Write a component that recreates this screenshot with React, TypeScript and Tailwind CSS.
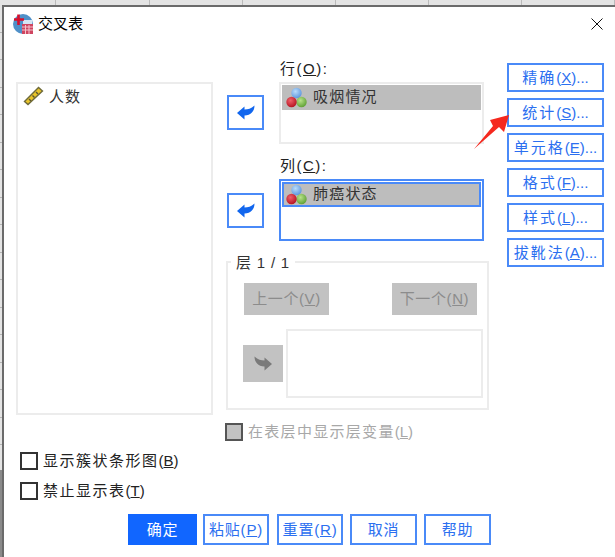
import React from "react";

const fontStack = "font-['Liberation_Sans','Noto_Sans_CJK_SC',sans-serif]";

function ArrowIcon({ flip, color }: { flip?: boolean; color: string }) {
  return (
    <svg width="18" height="15" viewBox="0 0 18 15" className={flip ? "-scale-x-100" : ""}>
      <path d="M0 8 L7.5 1.5 L7.5 4.5 C11 4.5 14 3.5 17.5 0.5 C17.5 6 14 10.5 7.5 10.5 L7.5 14.5 Z" fill={color} />
    </svg>
  );
}

function VarIcon() {
  return (
    <svg width="21" height="21" viewBox="0 0 21 21" className="shrink-0">
      <defs>
        <radialGradient id="ballBlue" cx="40%" cy="35%" r="70%">
          <stop offset="0%" stopColor="#b9dcfb" />
          <stop offset="100%" stopColor="#5a94dc" />
        </radialGradient>
        <radialGradient id="ballRed" cx="40%" cy="35%" r="70%">
          <stop offset="0%" stopColor="#f0606a" />
          <stop offset="100%" stopColor="#b3101f" />
        </radialGradient>
        <radialGradient id="ballGreen" cx="40%" cy="35%" r="70%">
          <stop offset="0%" stopColor="#b8e28a" />
          <stop offset="100%" stopColor="#5c9e32" />
        </radialGradient>
      </defs>
      <circle cx="10.5" cy="6" r="5.2" fill="url(#ballBlue)" />
      <circle cx="15.5" cy="15" r="5.2" fill="url(#ballGreen)" />
      <circle cx="5.5" cy="15" r="5.2" fill="url(#ballRed)" />
    </svg>
  );
}

function RulerIcon() {
  return (
    <svg width="21" height="20" viewBox="0 0 21 20" className="shrink-0">
      <path d="M0.5 15.5 L15.5 0.5 L20.5 5 L5 19.5 Z" fill="#6e6a3a" />
      <path d="M2.5 15.5 L15.5 2.5 L18.5 5 L5 17.5 Z" fill="#e8c32a" />
      <path d="M6 13 L8 15 M9.5 9.5 L11.5 11.5 M13 6 L15 8" stroke="#5a5530" strokeWidth="1.4" />
    </svg>
  );
}

function TitleIcon() {
  return (
    <svg width="20" height="20" viewBox="0 0 20 20" className="shrink-0">
      <circle cx="10" cy="10" r="10" fill="#4f90c8" />
      <path d="M10 6 H19 V11 H10 Z" fill="#d5e6f4" />
      <rect x="9" y="10" width="11" height="10" fill="#cf4560" />
      <path d="M9 13 H20 M9 16 H20 M12.5 11 V20 M16 11 V20" stroke="#f3c3cc" strokeWidth="1" />
      <path d="M1 5.5 H11 M5.5 0.5 V11" stroke="#d8102c" strokeWidth="2.6" />
    </svg>
  );
}

function SideButton({ label, mn }: { label: string; mn: string }) {
  return (
    <button className="flex h-[29px] w-[97px] items-center justify-center border-2 border-[#4a8af8] bg-white pt-[2px] text-[15px] text-[#2b6ff0]">
      <span className="tracking-[2px]">{label}</span>(<u>{mn}</u>)...
    </button>
  );
}

function FootButton({ children, primary, width }: { children: React.ReactNode; primary?: boolean; width: string }) {
  return (
    <button
      className={`flex h-[31px] items-center justify-center border-2 pt-px text-[15px] tracking-[0.8px] ${width} ${
        primary ? "border-[#1166ff] bg-[#1166ff] text-white" : "border-[#4a8af8] bg-white text-[#2b6ff0]"
      }`}
    >
      {children}
    </button>
  );
}

function TargetRow({
  label,
  mn,
  value,
  active,
  arrowTop,
}: {
  label: string;
  mn: string;
  value: string;
  active?: boolean;
  arrowTop: string;
}) {
  return (
    <div className="flex">
      <button className={`ml-px flex h-[35px] w-[37px] items-center justify-center border-2 border-[#4a8af8] bg-white ${arrowTop}`}>
        <ArrowIcon color="#1166ee" />
      </button>
      <div className="ml-[15px] w-[205px]">
        <div className="h-[22px] pl-px text-[15px] leading-[18px] tracking-[1.5px] text-[#222]">
          {label}(<u>{mn}</u>):
        </div>
        <div className={`h-[62px] border-2 p-[1px] ${active ? "border-[#4a8af8]" : "border-[#ececec]"}`}>
          <div
            className={`flex h-[25px] items-center gap-[6px] bg-[#bdbdbd] text-[15px] tracking-[1.2px] text-[#333] ${
              active ? "border-2 border-[#4a8af8] pl-[2px]" : "pl-[4px]"
            }`}
          >
            <VarIcon />
            <span>{value}</span>
          </div>
        </div>
      </div>
    </div>
  );
}

function Checkbox({ label, mn }: { label: string; mn: string }) {
  return (
    <label className="flex h-[18px] items-center gap-[5px] text-[15px] text-[#222]">
      <span className="h-[18px] w-[18px] border-2 border-[#333] bg-white" />
      <span>
        <span className="tracking-[1.5px]">{label}</span>(<u>{mn}</u>)
      </span>
    </label>
  );
}

export default function App() {
  return (
    <div className={`relative h-[557px] w-[615px] overflow-hidden bg-[#e4e4e4] ${fontStack}`}>
      {/* spreadsheet behind the dialog */}
      <div className="flex h-[5px]">
        <div className="w-[57px] border-r border-[#bbbbbb]" />
        {[0, 1, 2, 3, 4, 5].map((i) => (
          <div key={i} className="w-[94px] border-r border-[#bbbbbb]" />
        ))}
      </div>

      <div className="flex h-[552px]">
        <div className="flex w-[2px] flex-col">
          <div className="h-[465px]">
            {Array.from({ length: 17 }).map((_, i) => (
              <div key={i} className="h-[27.5px] border-b border-[#b5b5b5]" />
            ))}
          </div>
          <div className="flex-1 bg-[#8a8a8a]" />
        </div>

        <div className="flex-1 border-t-2 border-l-2 border-[#6b6b6b] bg-white">
          {/* title bar */}
          <div className="flex h-[27px] items-center justify-between pt-[7px] pr-[12px] pl-[9px]">
            <div className="flex items-center gap-[5px]">
              <TitleIcon />
              <span className="text-[15px] leading-[20px] text-black">交叉表</span>
            </div>
            <svg width="12" height="12" viewBox="0 0 12 12">
              <path d="M0.5 0.5 L11.5 11.5 M11.5 0.5 L0.5 11.5" stroke="#111" strokeWidth="1" />
            </svg>
          </div>

          <div className="mt-[26px] flex pl-[12px]">
            {/* source list */}
            <div className="mt-[22px] flex h-[333px] w-[197px] items-start gap-[5px] border-2 border-[#ececec] px-[5px] pt-[2px]">
              <RulerIcon />
              <span className="text-[15px] leading-[22px] tracking-[1px] text-[#333]">人数</span>
            </div>

            <div className="ml-[13px] w-[263px]">
              <TargetRow label="行" mn="O" value="吸烟情况" arrowTop="mt-[35px]" />
              <div className="mt-[13px]">
                <TargetRow label="列" mn="C" value="肺癌状态" active arrowTop="mt-[36px]" />
              </div>

              {/* layer group */}
              <div className="relative mt-[20px] h-[149px] border-2 border-[#ececec] pt-[20px]">
                <span className="absolute -top-[10px] left-[3px] bg-white px-[5px] text-[15px] leading-[20px] tracking-[0.8px] text-[#333]">
                  层 1 / 1
                </span>
                <div className="flex justify-between pr-[10px] pl-[16px]">
                  <button className="h-[32px] w-[85px] bg-[#c2c2c2] text-[15px] tracking-[0.6px] text-[#8c8c8c]">
                    上一个(<u>V</u>)
                  </button>
                  <button className="h-[32px] w-[85px] bg-[#c2c2c2] text-[15px] tracking-[0.6px] text-[#8c8c8c]">
                    下一个(<u>N</u>)
                  </button>
                </div>
                <div className="mt-[14px] flex items-center pl-[15px]">
                  <div className="flex h-[37px] w-[40px] items-center justify-center bg-[#c2c2c2]">
                    <ArrowIcon flip color="#7a7a7a" />
                  </div>
                  <div className="ml-[3px] h-[69px] w-[197px] border-2 border-[#ececec]" />
                </div>
              </div>

              <div className="mt-[13px] flex h-[18px] items-center gap-[5px] text-[15px] text-[#a8a8a8]">
                <span className="-ml-px h-[18px] w-[18px] border-2 border-[#555] bg-[#c2c2c2]" />
                <span>
                  <span className="tracking-[1.3px]">在表层中显示层变量</span>(<u>L</u>)
                </span>
              </div>
            </div>

            {/* side buttons */}
            <div className="mt-[3px] ml-[18px] flex flex-col gap-[6px]">
              <SideButton label="精确" mn="X" />
              <SideButton label="统计" mn="S" />
              <SideButton label="单元格" mn="E" />
              <SideButton label="格式" mn="F" />
              <SideButton label="样式" mn="L" />
              <SideButton label="拔靴法" mn="A" />
            </div>
          </div>

          <div className="mt-[11px] flex flex-col gap-[12px] pl-[16px]">
            <Checkbox label="显示簇状条形图" mn="B" />
            <Checkbox label="禁止显示表" mn="T" />
          </div>

          <div className="mt-[14px] flex pl-[124px]">
            <FootButton primary width="w-[69px]">确定</FootButton>
            <div className="ml-[6px]">
              <FootButton width="w-[66px]">
                <span>粘贴(<u>P</u>)</span>
              </FootButton>
            </div>
            <div className="ml-[8px]">
              <FootButton width="w-[66px]">
                <span>重置(<u>R</u>)</span>
              </FootButton>
            </div>
            <div className="ml-[7px]">
              <FootButton width="w-[67px]">取消</FootButton>
            </div>
            <div className="ml-[7px]">
              <FootButton width="w-[67px]">帮助</FootButton>
            </div>
          </div>
        </div>
      </div>

      {/* red annotation arrow */}
      <svg width="40" height="40" viewBox="0 0 40 40" className="absolute top-[112px] left-[472px]">
        <path d="M2 37 L21 14 L18 8 L37 3 L32 20 L27 15 Z" fill="#f5281e" />
      </svg>
    </div>
  );
}
